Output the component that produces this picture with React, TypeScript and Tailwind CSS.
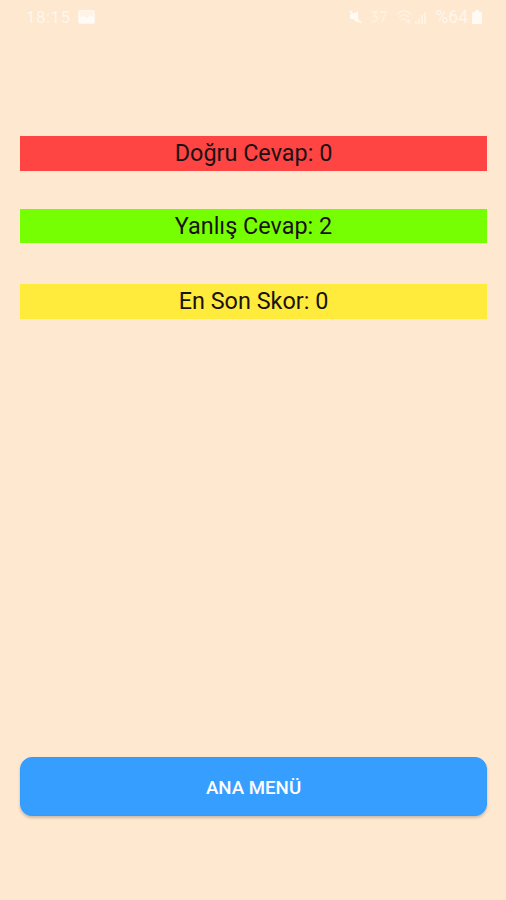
import React from 'react';

const scores = [
  { label: 'Doğru Cevap', value: 0, style: 'bg-[#ff4444] mt-[102px]' },
  { label: 'Yanlış Cevap', value: 2, style: 'bg-[#76ff03] mt-[38px] pt-px' },
  { label: 'En Son Skor', value: 0, style: 'bg-[#ffeb3b] mt-[41px]' },
];

function StatusBar() {
  return (
    <header className="flex h-[34px] items-center justify-between pl-[26px] pr-[23px] text-[#fff6ec]">
      <div className="flex items-center gap-2">
        <span className="text-[17px] leading-none tracking-[0.4px]">18:15</span>
        {/* Gallery notification */}
        <svg width="17" height="14" viewBox="0 0 17 14">
          <rect x="0.7" y="0.7" width="15.6" height="12.6" rx="2" fill="#fff3e6" stroke="#fff7ef" strokeWidth="1.4" />
          <path d="M1 8l4-2 4 2 3-3 4 3v4a1 1 0 0 1-1 1H2a1 1 0 0 1-1-1z" fill="#fffcf8" />
        </svg>
      </div>
      <div className="flex items-center">
        {/* Muted speaker */}
        <svg width="14" height="16" viewBox="0 0 14 16" fill="#fffaf4">
          <path d="M1 5h3l5-3v12l-5-4H1z" />
          <path d="M1 2l11 12" stroke="#fffaf4" strokeWidth="1.5" />
        </svg>
        {/* VoWiFi */}
        <svg className="ml-2" width="17" height="16" viewBox="0 0 17 16" fill="none" stroke="#fff2e4" strokeWidth="1.3">
          <path d="M1 3h5L3 7q4 0 3 4-2 3-5 1M9 3h6l-4 10" />
        </svg>
        {/* Wifi */}
        <svg className="ml-2" width="18" height="16" viewBox="0 0 18 16" fill="none" stroke="#fff2e4" strokeWidth="1.4">
          <path d="M1 5q7-6 14 0M3 8q5-4 10 0M5 11q3-2 6 0M10 14l3-3v4" />
        </svg>
        {/* Signal */}
        <svg width="12" height="16" viewBox="0 0 12 16" fill="none" stroke="#fff4e8" strokeWidth="1.6">
          <path d="M2 15v-3M5 15v-5M8 15V6M11 15V3" />
        </svg>
        <span className="ml-2.5 mr-[3px] pt-0.5 text-[17.5px] leading-none">%64</span>
        {/* Battery */}
        <svg width="12" height="14" viewBox="0 0 12 14" fill="#fffaf4">
          <path d="M4 0h4v2h2a1 1 0 0 1 1 1v10a1 1 0 0 1-1 1H2a1 1 0 0 1-1-1V3a1 1 0 0 1 1-1h2z" />
        </svg>
      </div>
    </header>
  );
}

export default function App() {
  return (
    <div className="flex h-[900px] w-[506px] flex-col bg-[#fee8d0] font-[Roboto,sans-serif]">
      <StatusBar />
      <main className="flex flex-1 flex-col pl-5 pr-[19px]">
        {scores.map((score) => (
          <p
            key={score.label}
            className={`flex h-[34.5px] items-center justify-center text-[23.4px] text-[#1a1212] ${score.style}`}
          >
            {score.label}: {score.value}
          </p>
        ))}
        <button className="mb-[84px] mt-auto h-[59px] rounded-[12px] border border-[#359bfa] bg-[#369eff] pt-[3px] text-[18.7px] font-medium text-white shadow-[0_2px_3px_rgba(0,0,0,0.2)]">
          ANA MENÜ
        </button>
      </main>
    </div>
  );
}
